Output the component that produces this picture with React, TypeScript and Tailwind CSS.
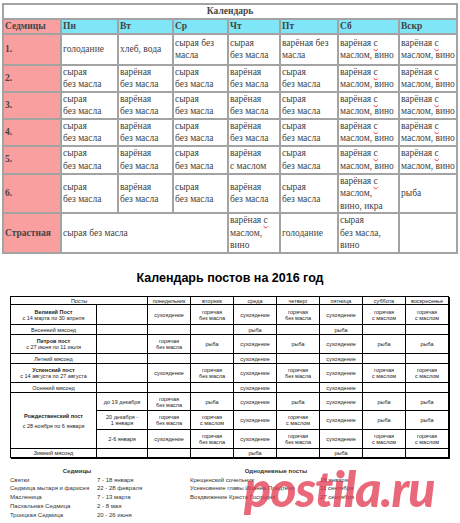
import React from "react";

const W = "варёная с|маслом, вино";
const R2 = ["сырая|без масла", "варёная|без масла", "сырая|без масла", "варёная|без масла", "сырая|без масла", W, W];

const weekRows = [
  { n: "1.", h: "h-[31px]", cells: ["голодание", "хлеб, вода", "сырая без|масла", "сырая|без масла", "варёная без|масла", W, W] },
  { n: "2.", h: "h-[26px]", cells: R2 },
  { n: "3.", h: "h-[27px]", cells: R2 },
  { n: "4.", h: "h-[27px]", cells: R2 },
  { n: "5.", h: "h-[28px]", cells: ["сырая|без масла", "варёная|без масла", "сырая|без масла", "варёная|с маслом", "сырая|без масла", W, W] },
  { n: "6.", h: "h-[39px]", cells: ["сырая|без масла", "варёная|без масла", "сырая|без масла", "варёная|без масла", "сырая|без масла", "варёная с|маслом,|вино, икра", "рыба"] },
];

function Lines({ text }: { text: string }) {
  return (
    <>
      {text.split("|").map((l, i) => (
        <div key={i}>
          {l.endsWith(" с") ? (
            <>
              {l.slice(0, -1)}
              <span className="underline decoration-wavy decoration-red-500 decoration-[0.5px]">с</span>
            </>
          ) : (
            l
          )}
        </div>
      ))}
    </>
  );
}

const td = "border-2 border-[#a3a3a3] px-[1px] align-middle";

function TopTable() {
  return (
    <table className="table-fixed border-collapse w-[454px] text-[9.5px] leading-[12.5px] text-[#444] font-[family-name:'Liberation_Serif',serif]">
      <colgroup>
        <col className="w-[58px]" />
        <col className="w-[57px]" />
        <col className="w-[55px]" />
        <col className="w-[55px]" />
        <col className="w-[52px]" />
        <col className="w-[58px]" />
        <col className="w-[61px]" />
        <col className="w-[58px]" />
      </colgroup>
      <tbody>
        <tr className="h-[14px]">
          <td colSpan={8} className={`${td} text-center font-bold`}>Календарь</td>
        </tr>
        <tr className="h-[15px] font-bold">
          <td className={`${td} bg-[#fa9f9f]`}>Седмицы</td>
          {["Пн", "Вт", "Ср", "Чт", "Пт", "Сб", "Вскр"].map((d) => (
            <td key={d} className={`${td} bg-[#7fe6f7]`}>{d}</td>
          ))}
        </tr>
        {weekRows.map((r) => (
          <tr key={r.n} className={r.h}>
            <td className={`${td} bg-[#fa9f9f] font-bold`}>{r.n}</td>
            {r.cells.map((c, i) => (
              <td key={i} className={td}>
                <Lines text={c} />
              </td>
            ))}
          </tr>
        ))}
        <tr className="h-[40px]">
          <td className={`${td} bg-[#fa9f9f] font-bold`}>Страстная</td>
          <td colSpan={3} className={td}>сырая без масла</td>
          <td className={td}><Lines text="варёная с|маслом,|вино" /></td>
          <td className={td}>голодание</td>
          <td className={td}><Lines text="сырая|без масла,|вино" /></td>
          <td className={td}></td>
        </tr>
      </tbody>
    </table>
  );
}

const B = "горячая|без масла";
const S = "горячая|с маслом";
const X = "сухоядение";
const F = "рыба";

type PostRow = { h: string; title?: string; sub?: string; plain?: string; days: string[] };

const postRows: PostRow[] = [
  { h: "h-[20px]", title: "Великий Пост", sub: "с 14 марта по 30 апреля", days: [X, B, X, B, X, S, S] },
  { h: "h-[10px]", plain: "Весенний мясоед", days: ["", "", F, "", F, "", ""] },
  { h: "h-[19px]", title: "Петров пост", sub: "с 27 июня по 11 июля", days: [B, F, X, F, X, F, F] },
  { h: "h-[10px]", plain: "Летний мясоед", days: ["", "", X, "", X, "", ""] },
  { h: "h-[19px]", title: "Успенский пост", sub: "с 14 августа по 27 августа", days: [X, B, X, B, X, S, S] },
  { h: "h-[10px]", plain: "Осенний мясоед", days: ["", "", X, "", X, "", ""] },
];

const xmas = [
  { h: "h-[18px]", part: "до 19 декабря", days: [B, F, X, F, X, F, F] },
  { h: "h-[19px]", part: "20 декабря -|1 января", days: [B, S, X, S, X, F, F] },
  { h: "h-[19px]", part: "2-6 января", days: [X, B, X, B, X, S, S] },
];

const bd = "border border-black text-center align-middle px-[1px]";

function DayCells({ days }: { days: string[] }) {
  return (
    <>
      {days.map((d, i) => (
        <td key={i} className={bd}>
          {d.split("|").map((l, j) => (
            <div key={j}>{l}</div>
          ))}
        </td>
      ))}
    </>
  );
}

function PostTable() {
  return (
    <table className="table-fixed border-collapse w-[438px] text-[5.5px] leading-[6px] text-[#222] font-[family-name:'Liberation_Sans',Arial,sans-serif] shadow-[1px_1px_0_#000]">
      <colgroup>
        <col className="w-[86px]" />
        <col className="w-[51px]" />
        {[0, 1, 2, 3, 4, 5, 6].map((i) => (
          <col key={i} className="w-[43px]" />
        ))}
      </colgroup>
      <tbody>
        <tr className="h-[8px]">
          <td colSpan={2} className={bd}>Посты</td>
          {["понедельник", "вторник", "среда", "четверг", "пятница", "суббота", "воскресенье"].map((d) => (
            <td key={d} className={bd}>{d}</td>
          ))}
        </tr>
        {postRows.map((r, i) => (
          <tr key={i} className={r.h}>
            {r.plain ? (
              <td className={bd}>{r.plain}</td>
            ) : (
              <td className={bd}>
                <div className="font-bold">{r.title}</div>
                <div>{r.sub}</div>
              </td>
            )}
            <td className={bd}></td>
            <DayCells days={r.days} />
          </tr>
        ))}
        {xmas.map((r, i) => (
          <tr key={i} className={r.h}>
            {i === 0 && (
              <td rowSpan={3} className={bd}>
                <div className="font-bold">Рождественский пост</div>
                <div className="mt-[4px]">с 28 ноября по 6 января</div>
              </td>
            )}
            <td className={bd}>
              {r.part.split("|").map((l, j) => (
                <div key={j}>{l}</div>
              ))}
            </td>
            <DayCells days={r.days} />
          </tr>
        ))}
        <tr className="h-[9px]">
          <td className={bd}>Зимний мясоед</td>
          <td className={bd}></td>
          <DayCells days={["", "", F, "", F, "", ""]} />
        </tr>
      </tbody>
    </table>
  );
}

const weeks = [
  ["Святки", "7 - 18 января"],
  ["Седмица мытаря и фарисея", "22 - 28 февраля"],
  ["Масленица", "7 - 13 марта"],
  ["Пасхальная Седмица", "2 - 8 мая"],
  ["Троицкая Седмица", "20 - 26 июня"],
];

const oneDay = [
  ["Крещенский сочельник", "18 января"],
  ["Усекновение главы Иоанна Предтечи", "11 сентября"],
  ["Воздвижение Креста Господня", "27 сентября"],
];

export default function App() {
  return (
    <div className="relative w-[460px] h-[523px] overflow-hidden bg-white">
      <div className="pt-[3px] pl-[2px]">
        <TopTable />
      </div>

      <h1 className="mt-[16px] text-center text-[12.5px] leading-[16px] font-bold text-black font-[family-name:'Liberation_Sans',Arial,sans-serif]">
        Календарь постов на 2016 год
      </h1>

      <div className="mt-[10px] pl-[10px]">
        <PostTable />
      </div>

      <div className="mt-[9px] flex text-[6px] leading-[8.7px] text-[#333] font-[family-name:'Liberation_Sans',Arial,sans-serif]">
        <div className="pl-[10px] w-[180px]">
          <div className="w-[134px] text-center font-bold">Седмицы</div>
          {weeks.map(([a, b]) => (
            <div key={a} className="flex">
              <span className="w-[87px]">{a}</span>
              <span>{b}</span>
            </div>
          ))}
        </div>
        <div className="pl-[10px]">
          <div className="w-[172px] text-center font-bold">Однодневные посты</div>
          {oneDay.map(([a, b]) => (
            <div key={a} className="flex">
              <span className="w-[130px]">{a}</span>
              <span>{b}</span>
            </div>
          ))}
        </div>
      </div>

      <div className="absolute left-[244px] top-[463px] text-[50px] leading-none font-black italic text-[#e2374f]/75 font-[family-name:'Lato',sans-serif] tracking-[-1px]">
        postila.ru
      </div>
    </div>
  );
}
